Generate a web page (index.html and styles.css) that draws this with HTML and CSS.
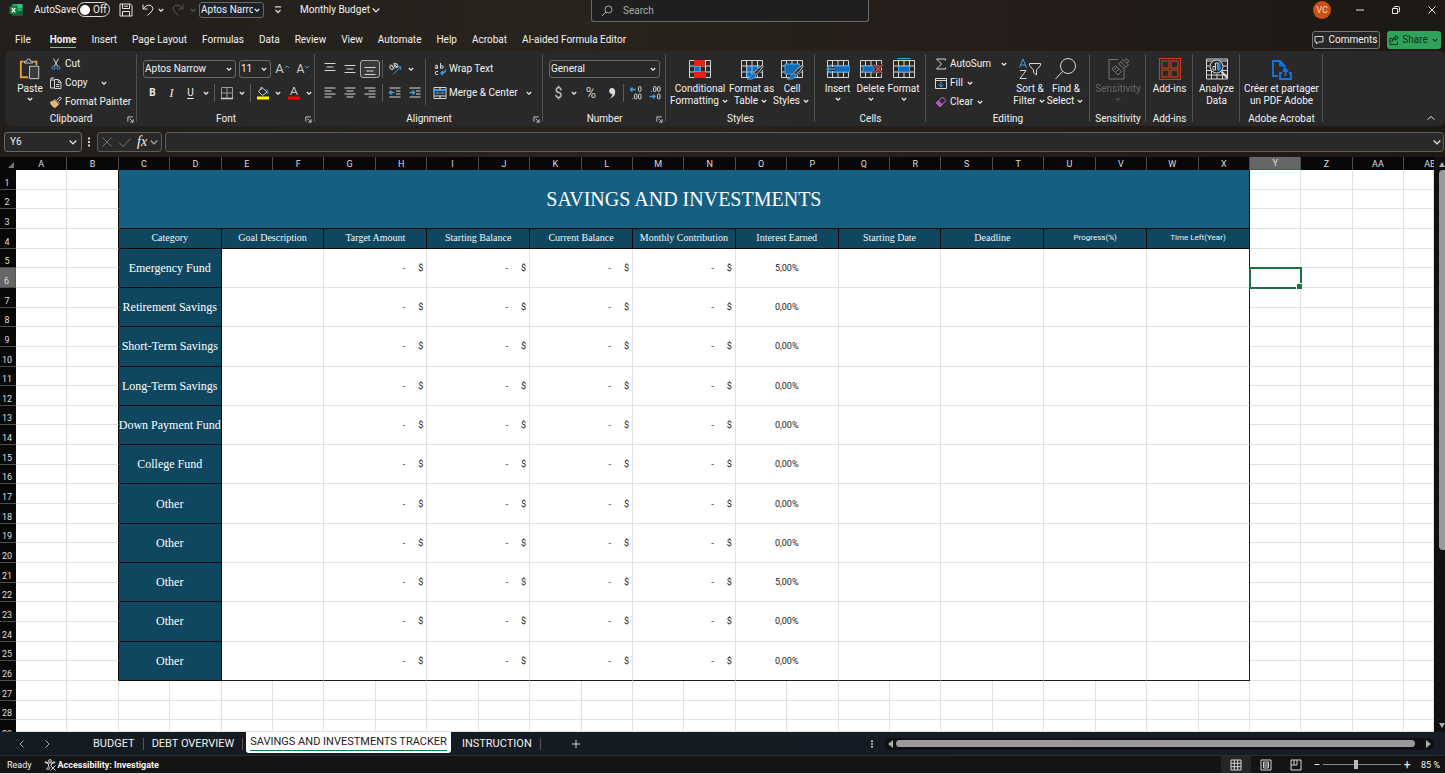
FILE: index.html
```html
<!DOCTYPE html>
<html lang="en">
<head>
<meta charset="utf-8">
<title>Monthly Budget</title>
<link rel="stylesheet" href="styles.css">
</head>
<body>
<svg class="sprite" aria-hidden="true">
  <symbol id="chev" viewBox="0 0 8 8"><path d="M1.8 3 L4 5.2 L6.2 3"/></symbol>
  <symbol id="launch" viewBox="0 0 8 8"><path d="M1 6.5V1H6.5M3 3L7 7M7 3.8V7H3.8"/></symbol>
  <symbol id="grid" viewBox="0 0 24 22"><path d="M1.5 2.5H22.5V19.5H1.5ZM1.5 8H22.5M1.5 14H22.5M6.5 2.5V19.5M12 2.5V19.5M17.5 2.5V19.5"/></symbol>
  <symbol id="brush" viewBox="0 0 24 22"><path class="halo" d="M23 8L14 17"/><path d="M22.5 7.2Q18 9.500 13.500 15L15.500 17Q20.500 12.500 23 8.500Z" fill="#292929"/><path class="bluefill" d="M14 15.500Q17 17 15 19.500Q12 22 7 21Q10.500 19.500 11 17.500Q12 15.500 14 15.500Z"/></symbol>
</svg>

<header class="titlebar">
  <div class="quick">
    <svg class="logo" viewBox="0 0 14 14"><rect x="3" y="1" width="10.500" height="12" rx="1" fill="#21a366"/><path d="M8 1H12.500a1 1 0 0 1 1 1V5H8Z" fill="#33c481"/><path d="M3 8H13.500V12a1 1 0 0 1-1 1H4a1 1 0 0 1-1-1Z" fill="#185c37"/><rect x="0.500" y="3" width="8" height="8" rx="0.800" fill="#107c41"/><path d="M2.700 4.800L6.300 9.300M6.300 4.800L2.700 9.300" stroke="#fff" stroke-width="1.200"/></svg>
    <label class="autosave" for="autosave">AutoSave</label>
    <button class="toggle" id="autosave"><i></i>Off</button>
    <button class="ico save" aria-label="Save"><svg viewBox="0 0 14 14"><path d="M1 1H11.500L13 2.500V13H1ZM3.500 1V5.500H10.500V1M3.500 13V8.500H10.500V13M5 3.200H9"/></svg></button>
    <button class="ico undo" aria-label="Undo"><svg viewBox="0 0 14 14"><path d="M2 1.500V6H6.500M2.200 5.800Q6 1 10 2.500Q13.500 5 11 8L6.500 12.500"/></svg></button>
    <svg class="chev"><use href="#chev"/></svg>
    <button class="ico redo dim" aria-label="Redo"><svg viewBox="0 0 14 14"><path d="M12 1.500V6H7.500M11.800 5.800Q8 1 4 2.500Q0.500 5 3 8L7.500 12.500"/></svg></button>
    <svg class="chev faint"><use href="#chev"/></svg>
    <span class="combo quickfont"><select aria-label="Quick font"><option>Aptos Narrow</option></select><svg class="chev"><use href="#chev"/></svg></span>
    <svg class="more" viewBox="0 0 8 8"><path d="M1.500 1.500H6.500M2 4L4 6L6 4"/></svg>
    <button class="doc">Monthly Budget<svg class="chev wide"><use href="#chev"/></svg></button>
  </div>
  <label class="search"><svg viewBox="0 0 12 12"><circle cx="7.500" cy="4.500" r="3.500"/><path d="M5 7L1 11"/></svg><input type="text" placeholder="Search" aria-label="Search"></label>
  <div class="window">
    <span class="avatar">VC</span>
    <button class="ico" aria-label="Minimize"><svg viewBox="0 0 10 10"><path d="M1 5H9"/></svg></button>
    <button class="ico" aria-label="Restore"><svg viewBox="0 0 10 10"><path d="M1.500 3.500H6.500V8.500H1.500ZM3 3.500V2.500Q3 1.500 4 1.500H7.500Q8.500 1.500 8.500 2.500V6Q8.500 7 7.500 7H6.500"/></svg></button>
    <button class="ico" aria-label="Close"><svg viewBox="0 0 10 10"><path d="M1.500 1.500L8.500 8.500M8.500 1.500L1.500 8.500"/></svg></button>
  </div>
</header>

<nav class="tabs">
  <a class="file" href="#">File</a><a class="current" href="#">Home</a><a href="#">Insert</a><a href="#">Page Layout</a><a href="#">Formulas</a><a href="#">Data</a><a href="#">Review</a><a href="#">View</a><a href="#">Automate</a><a href="#">Help</a><a href="#">Acrobat</a><a href="#">AI-aided Formula Editor</a>
  <span class="grow"></span>
  <button class="comments"><svg viewBox="0 0 10 10"><path d="M1 1.500H9V7H4.500L2.500 9V7H1Z"/></svg>Comments</button>
  <button class="share"><svg viewBox="0 0 10 10"><path d="M3 3.500H1V9.500H8.500V6.500M3 6.500Q3.500 3.500 6.500 3.500V5.200L9.300 2.800L6.500 0.600V2.200Q3 2.500 3 6.500"/></svg>Share<svg class="chev"><use href="#chev"/></svg></button>
</nav>

<section class="ribbon">
  <div class="group clipboard">
    <div class="content">
      <button class="big paste"><svg viewBox="0 0 24 24"><path d="M5 4H2V21H10M16 4H19V8" stroke="#e8a33d" stroke-width="2"/><path d="M6 5.500V3.500H8.500Q8.500 1 10.500 1T12.500 3.500H15V5.500Z"/><path d="M11.500 9H21.500V22.500H11.500Z" fill="#3a3a3a"/></svg><span>Paste</span><svg class="chev"><use href="#chev"/></svg></button>
      <div class="stack">
        <button><svg viewBox="0 0 12 12"><path d="M3.500 0.500L7.800 8.500M8.500 0.500L4.200 8.500"/><g class="blue"><circle cx="3.500" cy="9.800" r="1.600"/><circle cx="8.500" cy="9.800" r="1.600"/></g></svg>Cut</button>
        <button><svg viewBox="0 0 12 12"><path d="M4 3H0.500V11H4M4 1H1V3M4.500 2.500H8.500L11 5V11.500H4.500ZM8.200 2.500V5.300H11M6 7.500H9.500M6 9.500H9.500"/></svg>Copy<svg class="chev far"><use href="#chev"/></svg></button>
        <button><svg viewBox="0 0 12 12"><path d="M7 4L10 1L11.500 2.500L8.500 5.500M5 3.500L9 7.500L8 8.500L4 4.500Z"/><path d="M4 4.500Q2.500 6 0.500 6Q1 9.500 4.500 11.500Q7 10.500 8 8.500Z" fill="#e8b45c" stroke="#f3d08c"/></svg>Format Painter</button>
      </div>
    </div>
    <footer>Clipboard<svg class="launch"><use href="#launch"/></svg></footer>
  </div>

  <div class="group font">
    <div class="content rows">
      <div class="row">
        <span class="combo name"><select aria-label="Font"><option>Aptos Narrow</option></select><svg class="chev"><use href="#chev"/></svg></span>
        <span class="combo size"><select aria-label="Font size"><option>11</option></select><svg class="chev"><use href="#chev"/></svg></span>
        <button class="tool glyph" aria-label="Grow font">A<svg viewBox="0 0 6 10"><path class="blue" d="M1 4L3 2L5 4"/></svg></button>
        <button class="tool glyph small" aria-label="Shrink font">A<svg viewBox="0 0 6 10"><path class="blue" d="M1 2L3 4L5 2"/></svg></button>
      </div>
      <div class="row styling">
        <button class="tool b">B</button><button class="tool i">I</button><button class="tool u">U</button><svg class="chev"><use href="#chev"/></svg><hr>
        <button class="tool" aria-label="Borders"><svg viewBox="0 0 14 14"><path class="grey" d="M1.500 1.500H12.500V12.500H1.500ZM7 1.500V12.500M1.500 7H12.500"/><path d="M1 12.500H13" stroke-width="1.500"/></svg></button><svg class="chev"><use href="#chev"/></svg><hr>
        <button class="tool" aria-label="Fill colour"><svg viewBox="0 0 14 14"><path d="M6 1.500L11 6L6.500 9.500L2.500 5.500ZM5 4V1"/><path class="blue" d="M10.500 3Q12.500 4 12 8"/><path d="M1 12H13" stroke="#ffff00" stroke-width="3"/></svg></button><svg class="chev"><use href="#chev"/></svg>
        <button class="tool" aria-label="Font colour"><svg viewBox="0 0 14 14"><path d="M3.500 9L7 1L10.500 9M4.700 6.300H9.300"/><path d="M1 12H13" stroke="#ff0000" stroke-width="3"/></svg></button><svg class="chev"><use href="#chev"/></svg>
      </div>
    </div>
    <footer>Font<svg class="launch"><use href="#launch"/></svg></footer>
  </div>

  <div class="group alignment">
    <div class="content">
      <div class="rows aligns">
        <div class="row">
          <button class="tool" aria-label="Top align"><svg viewBox="0 0 14 14"><path d="M1.500 1.500H12.500M3.500 5H10.500M1.500 8.500H12.500"/></svg></button><button class="tool" aria-label="Middle align"><svg viewBox="0 0 14 14"><path d="M1.500 3.500H12.500M3.500 7H10.500M1.500 10.500H12.500"/></svg></button><button class="tool on" aria-label="Bottom align"><svg viewBox="0 0 14 14"><path d="M1.500 5.500H12.500M3.500 9H10.500M1.500 12.500H12.500"/></svg></button><hr>
          <button class="tool" aria-label="Orientation"><svg viewBox="0 0 14 14"><ellipse cx="3.500" cy="5.500" rx="1.600" ry="2" transform="rotate(-40 3.500 5.500)"/><path d="M3.200 2.700L6.500 6.500M5.500 0.800L9 5.500"/><ellipse cx="8" cy="3.500" rx="1.600" ry="2" transform="rotate(-40 8 3.500)"/><path class="blue" d="M5 12.500L12.500 5M9.500 4.800H12.700V8"/></svg></button><svg class="chev"><use href="#chev"/></svg>
        </div>
        <div class="row">
          <button class="tool" aria-label="Align left"><svg viewBox="0 0 14 14"><path d="M1.500 2H12.500M1.500 5H8.500M1.500 8H12.500M1.500 11H8.500"/></svg></button><button class="tool" aria-label="Centre"><svg viewBox="0 0 14 14"><path d="M1.500 2H12.500M3.500 5H10.500M1.500 8H12.500M3.500 11H10.500"/></svg></button><button class="tool" aria-label="Align right"><svg viewBox="0 0 14 14"><path d="M1.500 2H12.500M5.500 5H12.500M1.500 8H12.500M5.500 11H12.500"/></svg></button><hr>
          <button class="tool" aria-label="Decrease indent"><svg viewBox="0 0 14 14"><path d="M1.500 2H12.500M8 5H12.500M8 8H12.500M1.500 11H12.500"/><path class="blue strong" d="M6.500 6.500H1.500M3.500 4.500L1.500 6.500L3.500 8.500"/></svg></button><button class="tool" aria-label="Increase indent"><svg viewBox="0 0 14 14"><path d="M1.500 2H12.500M8 5H12.500M8 8H12.500M1.500 11H12.500"/><path class="blue strong" d="M1.500 6.500H6.500M4.500 4.500L6.500 6.500L4.500 8.500"/></svg></button>
        </div>
      </div>
      <div class="rows wraps">
        <button class="row"><svg viewBox="0 0 14 14"><path d="M2 3.500Q4.500 2.500 4.500 4V6.500M4.500 5Q2 4.500 2 6Q3 7 4.500 6M7.500 1V6.500M7.500 4Q10.500 3 10.500 5T7.500 6M5 9.500Q2.200 8.700 2.200 11T5 12.500"/><path class="blue strong" d="M12.500 7.500Q13 11 8 11M10 9L8 11L10 13"/></svg>Wrap Text</button>
        <button class="row"><svg viewBox="0 0 14 14"><path d="M1 1.500H13V12.500H1ZM1 4H13M1 10H13M7 1.500V4M7 10V12.500"/><path class="blue" d="M1.500 4.500H12.500V9.500H1.500ZM3.500 7H10.500M5 5.500L3.500 7L5 8.500M9 5.500L10.500 7L9 8.500"/></svg>Merge &amp; Center<svg class="chev last"><use href="#chev"/></svg></button>
      </div>
    </div>
    <footer>Alignment<svg class="launch"><use href="#launch"/></svg></footer>
  </div>

  <div class="group number">
    <div class="content rows">
      <div class="row"><span class="combo format"><select aria-label="Number format"><option>General</option></select><svg class="chev"><use href="#chev"/></svg></span></div>
      <div class="row">
        <button class="tool sym">$</button><svg class="chev"><use href="#chev"/></svg><button class="tool sym pct">%</button><button class="tool sym comma" aria-label="Comma style"><svg viewBox="0 0 14 14"><path d="M7 2a3 3 0 1 0 .5 6Q7.500 10 5 12.500Q10.500 10.500 10.200 5.500Q9.800 2 7 2Z" fill="#ddd" stroke="none"/></svg></button><hr>
        <button class="tool" aria-label="Increase decimal"><svg viewBox="0 0 14 14"><path class="blue strong" d="M7 3.500H1.500M3.500 1.500L1.500 3.500L3.500 5.500"/><rect x="9.500" y=".5" width="2.500" height="5" rx="1.200"/><rect x="5.500" y="8" width="2.500" height="5" rx="1.200"/><rect x="9.500" y="8" width="2.500" height="5" rx="1.200"/><path d="M3.500 12.500h.8"/></svg></button>
        <button class="tool" aria-label="Decrease decimal"><svg viewBox="0 0 14 14"><path class="blue strong" d="M1.500 10.500H7M5 8.500L7 10.500L5 12.500"/><rect x="5.500" y=".5" width="2.500" height="5" rx="1.200"/><rect x="9.500" y=".5" width="2.500" height="5" rx="1.200"/><rect x="9.500" y="8" width="2.500" height="5" rx="1.200"/><path d="M3 5.500h.8"/></svg></button>
      </div>
    </div>
    <footer>Number<svg class="launch"><use href="#launch"/></svg></footer>
  </div>

  <div class="group styles">
    <div class="content bigs">
      <button class="big"><svg viewBox="0 0 24 22"><use href="#grid"/><path d="M6.500 2.500H16.500V8H6.500ZM6.500 14H17.500V19.500H6.500Z" fill="#e3231a" stroke="#e3231a"/><path class="bluefill" d="M6.500 8.500H12V13.500H6.500Z"/></svg><span>Conditional<br>Formatting<svg class="chev"><use href="#chev"/></svg></span></button>
      <button class="big"><svg viewBox="0 0 24 22"><use href="#grid"/><path class="bluefill" d="M7 8.500H22V14H17L12 19H7Z"/><path d="M12 8V19M17.500 8V14M7 14H20" stroke="#7fb9e8"/><use href="#brush"/></svg><span>Format as<br>Table<svg class="chev"><use href="#chev"/></svg></span></button>
      <button class="big"><svg viewBox="0 0 24 22"><use href="#grid"/><path class="bluefill" d="M5 6H19.500V16H5Z"/><use href="#brush"/></svg><span>Cell<br>Styles<svg class="chev"><use href="#chev"/></svg></span></button>
    </div>
    <footer>Styles</footer>
  </div>

  <div class="group cells">
    <div class="content bigs">
      <button class="big"><svg viewBox="0 0 24 22"><use href="#grid"/><path class="bluefill" d="M8 8H24V14H8Z"/><path d="M0 11H9" stroke="#292929" stroke-width="4"/><path class="blue strong" d="M9 11H.8M5.500 6.500L1 11L5.500 15.500"/></svg><span>Insert</span><svg class="chev"><use href="#chev"/></svg></button>
      <button class="big"><svg viewBox="0 0 24 22"><use href="#grid"/><path class="bluefill" d="M4 8H15V14H4Z"/><path d="M14.500 6.500L23.500 15.500M23.500 6.500L14.500 15.500" stroke="#292929" stroke-width="3"/><path d="M14.500 6.500L23.500 15.500M23.500 6.500L14.500 15.500" stroke="#e84a3d" stroke-width="1.300"/></svg><span>Delete</span><svg class="chev"><use href="#chev"/></svg></button>
      <button class="big"><svg viewBox="0 0 24 22"><use href="#grid"/><path class="bluefill" d="M6.500 8.500H17.500V14H6.500Z"/><path class="blue" d="M5.500.5H18.500"/></svg><span>Format</span><svg class="chev"><use href="#chev"/></svg></button>
    </div>
    <footer>Cells</footer>
  </div>

  <div class="group editing">
    <div class="content">
      <div class="stack">
        <button><svg viewBox="0 0 12 12"><path d="M10.500 2.500V1H1.500L6.500 6L1.500 11H10.500V9.500"/></svg>AutoSum<svg class="chev mid"><use href="#chev"/></svg></button>
        <button><svg viewBox="0 0 12 12"><path d="M.5 1.500H11.500V11.500H.5ZM.5 3.500H11.500"/><path class="blue" d="M6 4.500V10M3.500 7.500L6 10L8.500 7.500"/></svg>Fill<svg class="chev near"><use href="#chev"/></svg></button>
        <button><svg viewBox="0 0 12 12"><path d="M7.500 1L11 4.500L5 10.500L1.500 7Z" stroke="#c77dd4"/><path d="M3.500 5L7 8.500L5 10.500L1.500 7Z" fill="#b146c2" stroke="#c77dd4"/></svg>Clear<svg class="chev near"><use href="#chev"/></svg></button>
      </div>
      <button class="big"><svg viewBox="0 0 24 22"><path class="blue" d="M1.500 9.500L5 1L8.500 9.500M2.700 7H7.300"/><path d="M2 12.500H8L2 20.500H8.500M11.500 5.500H22.500V7.500L18.500 12V17L15.500 14.500V12L11.500 7.500Z"/></svg><span>Sort &amp;<br>Filter<svg class="chev"><use href="#chev"/></svg></span></button>
      <button class="big"><svg viewBox="0 0 24 22"><circle cx="14" cy="8" r="7.500"/><path d="M8.500 13.500L1.500 21"/></svg><span>Find &amp;<br>Select<svg class="chev"><use href="#chev"/></svg></span></button>
    </div>
    <footer>Editing</footer>
  </div>

  <div class="group sensitivity">
    <div class="content bigs"><button class="big faint"><svg viewBox="0 0 24 22"><path d="M12 1.500H3V21H18V11"/><path d="M6 11L9.500 7.500L15.500 13.500L12 17ZM7.500 12.500L11 9M9.500 14.500L13 11M12.500 6L17 1.500L22.500 7L18 10.500ZM15 4L19.500 8.500M19 .5L23 3L21 5"/></svg><span>Sensitivity</span><svg class="chev faint"><use href="#chev"/></svg></button></div>
    <footer>Sensitivity</footer>
  </div>
  <div class="group addins">
    <div class="content bigs"><button class="big"><svg viewBox="0 0 24 22"><g stroke="#c43e1c" stroke-width="1.200"><rect x="1.500" y=".5" width="21" height="21"/><rect x="4" y="3" width="7" height="7"/><rect x="13" y="3" width="7" height="7"/><rect x="4" y="12" width="7" height="7"/><rect x="13" y="12" width="7" height="7"/></g></svg><span>Add-ins</span></button></div>
    <footer>Add-ins</footer>
  </div>
  <div class="group analyze">
    <div class="content bigs"><button class="big"><svg viewBox="0 0 24 22"><path d="M1.500 1H22.500V21H1.500ZM1.500 3H22.500M1.500 8H22.500M1.500 12.500H22.500M1.500 17H22.500M6.500 12V21M12 16V21M17.500 14V21"/><circle cx="11.500" cy="8.500" r="6.500" fill="#292929"/><path d="M16.500 13.500L22.500 20" stroke-width="2"/><path d="M8 12V8.500H10.500V12ZM10.500 12V5H13V12"/><path class="bluefill" d="M13 5H15V12H13Z"/></svg><span>Analyze<br>Data</span></button></div>
  </div>
  <div class="group acrobat">
    <div class="content bigs"><button class="big"><svg viewBox="0 0 24 22"><path d="M9 18H4V3H11L15.500 7.500V11M11 3V7.500H15.500M13 15H11V21H22V15H20M16.500 18V11M13.800 13.500L16.500 11L19.200 13.500" stroke="#1473e6" stroke-width="1.800"/></svg><span>Créer et partager<br>un PDF Adobe</span></button></div>
    <footer>Adobe Acrobat</footer>
  </div>
  <button class="collapse" aria-label="Collapse ribbon"><svg viewBox="0 0 10 10"><path d="M1.500 6.500L5 3.500L8.500 6.500"/></svg></button>
</section>

<section class="formula">
  <span class="combo namebox"><select aria-label="Name box"><option>Y6</option></select><svg class="chev wide"><use href="#chev"/></svg></span>
  <svg class="dots" viewBox="0 0 4 12"><path d="M2 1.500v2M2 5v2M2 8.500v2" stroke-width="2"/></svg>
  <div class="fx">
    <svg class="dim" viewBox="0 0 12 12"><path d="M1.500 1.500L10.500 10.500M10.500 1.500L1.500 10.500"/></svg>
    <svg class="dim" viewBox="0 0 12 12"><path d="M.5 7L4 10.500L11.500 2.500"/></svg>
    <button>fx</button><svg class="chev wide soft"><use href="#chev"/></svg>
  </div>
  <label class="entry"><input type="text" aria-label="Formula"><svg class="chev wide"><use href="#chev"/></svg></label>
</section>

<main class="workspace">
  <table class="sheet" id="sheet"></table>
  <div class="vscroll"><i class="up"></i><b></b><i class="down"></i></div>
</main>

<nav class="sheets">
  <svg class="nav" viewBox="0 0 10 10"><path d="M6.500 1.500L3 5L6.500 8.500"/></svg>
  <svg class="nav" viewBox="0 0 10 10"><path d="M3.500 1.500L7 5L3.500 8.500"/></svg>
  <a class="first" href="#">BUDGET</a><a href="#">DEBT OVERVIEW</a><a class="active" href="#"><span>SAVINGS AND INVESTMENTS TRACKER</span></a><a href="#">INSTRUCTION</a>
  <button class="add" aria-label="New sheet"><svg viewBox="0 0 10 10"><path d="M5 1V9M1 5H9"/></svg></button>
  <span class="grow"></span>
  <svg class="dots" viewBox="0 0 4 12"><path d="M2 1.500v2M2 5v2M2 8.500v2" stroke-width="2"/></svg>
  <div class="hscroll"><i class="left"></i><b></b><i class="right"></i></div>
</nav>

<footer class="status">
  <span>Ready</span>
  <button class="access"><svg viewBox="0 0 12 12"><circle cx="6" cy="2" r="1.400"/><path d="M1 3.500L4.500 5V7.500L2.500 11M11 3.500L7.500 5L7.500 6.500M1 3.500Q1 2.500 2 2.700L4.500 4H7.500L10 2.700Q11 2.500 11 3.500M4.500 11L6 8M6.500 6.500L11.500 11.500M11.500 6.500L6.500 11.500"/></svg>Accessibility: Investigate</button>
  <span class="grow"></span>
  <button class="view on" aria-label="Normal"><svg viewBox="0 0 12 12"><path d="M1 1H11V11H1ZM4.300 1V11M7.700 1V11M1 4.300H11M1 7.700H11"/></svg></button>
  <button class="view" aria-label="Page layout"><svg viewBox="0 0 12 12"><path d="M1 1H11V11H1ZM3.500 3H8.500V9H3.500ZM4 5H8M4 7H8"/></svg></button>
  <button class="view" aria-label="Page break preview"><svg viewBox="0 0 12 12"><path d="M1 1H11V11H1ZM1 6H7V1M4 1V6"/></svg></button>
  <button class="step">−</button><input class="zoom" type="range" min="10" max="190" value="86" aria-label="Zoom"><button class="step">+</button>
  <span class="percent">85 %</span>
</footer>
<script src="sheet.js"></script>
</body>
</html>
```
FILE: styles.css
```css
* { box-sizing: border-box; }
body {
  margin: 0; min-height: 100vh; height: 100vh; overflow: hidden;
  display: flex; flex-direction: column;
  background: linear-gradient(90deg, #211e1b, #28231d 40%, #241d1a 70%, #1c1813);
  border-bottom: 1px solid #d8d8d8;
  color: #f2f2f2; font: 10px/12px Roboto, "Noto Sans", sans-serif;
}
svg { fill: none; stroke: #d6d6d6; stroke-width: 1; flex: none; }
.sprite { display: none; }
button, select, input { font: inherit; color: inherit; background: none; border: 0; padding: 0; margin: 0; }
button { display: flex; align-items: center; justify-content: center; white-space: nowrap; }
a { color: inherit; text-decoration: none; white-space: nowrap; }
hr { width: 1px; height: 18px; border: 0; background: #5c5c5c; margin: 0 2px; flex: none; }
.grow { flex: 1; }
.chev { width: 12px; height: 8px; stroke: #eee; stroke-width: 1.2; }
.chev.wide { width: 12px; height: 12px; stroke-width: 0.8; }
.blue { stroke: #3f9fe0; }
.strong { stroke-width: 1.4; }
.grey { stroke: #9a9a9a; }
.bluefill { fill: #0f6cbd; stroke: #4aa3e6; }
.halo { stroke: #292929; stroke-width: 5; }
.dim, .dim svg { stroke: #777; }
.faint, .faint svg { stroke: #777; color: #666; }
.chev.faint { stroke: #555; }
.soft { stroke: #aaa; }
.combo { position: relative; display: flex; align-items: center; height: 18px; border: 1px solid #686868; border-radius: 3px; }
.combo select { appearance: none; width: 100%; height: 100%; padding: 0 10px 0 1px; outline: none; }
.combo .chev { position: absolute; right: 0; }

.titlebar { display: grid; grid-template-columns: minmax(0, 591fr) 278px minmax(0, 576fr); height: 28px; flex: none; }
.quick, .window { display: flex; align-items: center; height: 19px; }
.logo { width: 14px; height: 14px; margin: 0 11px 0 9px; stroke: none; }
.autosave { width: 43px; }
.toggle { width: 33px; height: 15px; border: 1px solid #ddd; border-radius: 8px; justify-content: flex-start; gap: 3px; padding-left: 2px; }
.toggle i { width: 10px; height: 10px; border-radius: 50%; background: #fff; }
.ico svg { width: 14px; height: 14px; stroke: #e6e6e6; }
.ico.dim svg { stroke: #5a5550; }
.save { margin-left: 9px; }
.undo { margin-left: 8px; }
.redo { margin: 0 2px 0 4px; }
.quickfont { width: 65px; height: 16px; background: #1f2329; }
.more { width: 10px; height: 10px; margin: 0 17px 0 9px; }
.search { display: flex; align-items: center; height: 22px; border: 1px solid #6b6b6b; border-top: 0; border-radius: 0 0 3px 3px; background: #1f1f1f; padding: 0 9px; gap: 10px; }
.search svg { width: 12px; height: 12px; stroke: #aaa; }
.search input { flex: 1; min-width: 0; height: 16px; outline: none; }
.search input::placeholder { color: #a8a8a8; opacity: 1; }
.window { justify-content: flex-end; gap: 22px; padding-right: 6px; }
.avatar { width: 18px; height: 18px; border-radius: 50%; background: #ca5010; text-align: center; line-height: 18px; font-size: 9px; color: #f5d9c9; }
.window .ico svg { width: 10px; height: 10px; margin: 0 2px; }

.tabs { display: flex; align-items: center; height: 23px; flex: none; gap: 15px; padding: 0 4px 0 15px; }
.tabs a { height: 16px; line-height: 15px; }
.tabs .file { margin-right: 4px; }
.tabs .current { font-weight: 700; border-bottom: 1px solid #6ccb8f; }
.comments, .share { height: 18px; border-radius: 3px; gap: 4px; }
.comments { width: 68px; border: 1px solid #777; background: #262626; margin-right: -8px; }
.share { width: 54px; background: #2fa35c; color: #10301d; gap: 3px; }
.comments svg, .share svg { width: 10px; height: 10px; }
.share .chev { width: 8px; }
.share svg { stroke: #10301d; }

.ribbon { display: flex; height: 75px; flex: none; margin: 0 0 0 5px; padding: 2px 0 0; background: #292929; border-radius: 6px; }
.group { display: flex; flex-direction: column; position: relative; flex: none; height: 73px; }
.group::after { content: ""; position: absolute; right: 0; top: 1px; width: 1px; height: 68px; background: #505050; }
.content { display: flex; height: 59px; }
.group footer { text-align: center; height: 14px; line-height: 14px; }
.launch { position: absolute; right: 3px; bottom: 3px; width: 7px; height: 7px; }
.rows { display: flex; flex-direction: column; gap: 6px; padding-top: 7px; }
.row { display: flex; align-items: center; height: 18px; }
.tool { width: 19px; height: 18px; }
.tool svg { width: 14px; height: 14px; }
.tool.on { border: 1px solid #aaa; border-radius: 3px; background: #3a3a3a; }
.big { flex-direction: column; justify-content: flex-start; padding-top: 5px; text-align: center; }
.big > svg:first-child { width: 24px; height: 22px; margin-bottom: 3px; }
.big > span { display: block; }
.big span .chev { width: 10px; margin-left: 1px; vertical-align: -1px; }
.bigs { justify-content: center; }
.stack { display: grid; grid-template-rows: repeat(3, 1fr); padding-top: 1px; }
.stack button { justify-content: flex-start; gap: 3px; }
.stack button > svg:first-child { width: 12px; height: 12px; }

.clipboard { width: 132px; }
.paste { width: 36px; margin: 0 2px 0 7px; }
.far { margin-left: 7px; }
.font { width: 178px; }
.font .content, .number .content { padding-left: 6px; }
.styling .tool { width: 19px; }
.name { width: 93px; margin-right: 3px; }
.size { width: 32px; margin-right: 2px; }
.glyph { font-size: 13px; color: #ccc; align-items: center; }
.glyph.small { font-size: 12px; margin-left: 2px; }
.glyph svg { width: 6px; height: 12px; }
.b { font-weight: 700; }
.i { font-family: "Liberation Serif", serif; font-style: italic; font-size: 12px; }
.u { text-decoration: underline; text-underline-offset: 2px; }
.alignment { width: 228px; }
.aligns { width: 110px; padding-left: 5px; }
.aligns .tool { width: 20px; }
.wraps { position: relative; padding-left: 8px; }
.wraps::before { content: ""; position: absolute; left: 0; top: 6px; height: 46px; width: 1px; background: #505050; }
.wraps .row { gap: 2px; justify-content: flex-start; }
.wraps .row > svg:first-child { width: 14px; height: 14px; }
.last { margin-left: 3px; }
.number { width: 123px; }
.format { width: 111px; }
.sym { font-size: 14px; color: #ccc; }
.pct { width: 22px; }
.styles { width: 149px; }
.styles .bigs { justify-content: flex-start; padding-left: 5px; }
.styles .big { width: 45px; }
.styles .big:first-child { width: 58px; }
.styles .big:last-child { width: 36px; }
.cells { width: 111px; }
.cells .big { width: 33px; }
.editing { width: 164px; }
.editing .stack { width: 86px; padding-left: 9px; }
.editing .big { width: 36px; }
.mid { margin-left: 4px; }
.near { margin-left: -2px; }
.sensitivity { width: 56px; }
.addins, .analyze { width: 47px; }
.acrobat { width: 83px; }
.collapse { margin: auto 9px 3px auto; }
.collapse svg { width: 10px; height: 10px; }

.formula { display: flex; align-items: center; height: 31px; flex: none; padding: 0 1px 0 4px; }
.formula > * { height: 20px; }
.namebox { width: 78px; padding-left: 4px; background: #292929; }
.namebox .chev { right: 2px; }
.formula .dots { width: 4px; height: 12px; margin: 0 6px 0 5px; }
.fx { display: flex; align-items: center; gap: 6px; width: 65px; border: 1px solid #5c5c5c; border-radius: 3px; background: #292929; padding-left: 3px; }
.fx svg:not(.chev) { width: 12px; height: 12px; }
.fx button { font: italic 14px/16px "Liberation Serif", serif; }
.fx .chev { margin-left: -5px; }
.entry { flex: 1; display: flex; align-items: center; border: 1px solid #5c5c5c; border-radius: 3px; background: #292929; margin-left: 3px; }
.entry input { flex: 1; outline: none; }

.workspace { flex: 1; min-height: 0; display: flex; }
.sheet {
  flex: 1; min-width: 0; overflow: hidden; display: grid; background: #fff;
  grid-template-columns: 16px repeat(27, minmax(0, 50fr)) minmax(0, 29fr);
  grid-template-rows: 13px repeat(28, minmax(0, 50fr)) minmax(0, 30fr);
}
.sheet tbody, .sheet tr { display: contents; }
.sheet th, .sheet td { padding: 0; font-weight: 400; min-width: 0; white-space: nowrap; display: flex; align-items: center; justify-content: center; border: 0 solid #e1e1e1; }
.sheet td { border-width: 0 1px 1px 0; color: #222; font-size: 9px; }
.sheet .head { background: #080808; border-right: 1px solid #4c4c4c; font-size: 9px; color: #ddd; }
.sheet .head.picked { background: #666; border-bottom: 1px solid #107c41; }
.sheet .side { background: #080808; border-bottom: 1px solid #4c4c4c; font-size: 9px; color: #ddd; align-items: flex-end; padding-right: 2px; overflow: hidden; }
.sheet .side.picked { background: #666; border-right: 1px solid #107c41; }
.sheet .side.cut { align-items: flex-start; padding-top: 8px; border: 0; }
.sheet .head.cut { justify-content: flex-start; padding-left: 20px; overflow: hidden; border: 0; }
.sheet .corner { background: #080808; justify-content: flex-end; align-items: flex-end; padding: 2px; }
.corner::after { content: ""; border: 3px solid #777; border-top-color: transparent; border-left-color: transparent; }
.sheet .edge { border-right-color: #1c1c1c; }
.sheet .floor { border-bottom-color: #1c1c1c; }
.sheet .banner, .sheet .field, .sheet .category { border-width: 0 1px 1px 0; border-color: #0a0a0a; color: #fff; }
.sheet .banner { background: #156082; font: 20px/24px "Liberation Serif", serif; }
.sheet .field { background: #0f4761; color: #f4f4f4; font: 10px/12px "Liberation Serif", serif; }
.sheet .field.plain { font: 8px/12px Roboto, sans-serif; }
.sheet .category { background: #0f4761; font: 12px/14px "Liberation Serif", serif; }
.sheet .money { justify-content: flex-end; gap: 13px; padding-right: 3px; }
.sheet .before { border-right-color: #0a0a0a; }
.sheet .selected { position: relative; outline: 2px solid #197244; outline-offset: -1px; }
.selected::after { content: ""; position: absolute; right: -2px; bottom: -2px; width: 5px; height: 5px; background: #197244; border: 1px solid #fff; border-width: 1px 0 0 1px; }

.vscroll { width: 11px; background: #101010; display: flex; flex-direction: column; align-items: flex-end; padding: 4px 0 3px; gap: 3px; }
.vscroll b { width: 6px; flex: 0 1 380px; background: #9a9a9a; border-radius: 4px 0 0 4px; }
.up, .down { border: 3px solid transparent; height: 6px; }
.up { border-bottom: 5px solid #aaa; border-top: 0; }
.down { border-top: 5px solid #aaa; border-bottom: 0; margin-top: auto; }

.sheets { display: flex; align-items: center; height: 24px; flex: none; background: linear-gradient(90deg, #141b20, #171c27); font-size: 11px; padding: 0 11px 0 17px; border-bottom: 1px solid #2c2c2c; }
.nav { width: 10px; height: 10px; margin-right: 15px; stroke: #aaa; }
.sheets a { display: flex; align-items: center; height: 12px; padding: 0 8px; border-right: 1px solid #555; }
.sheets .first { margin-left: 18px; }
.sheets .active { align-self: flex-start; height: 21px; background: #fff; color: #222; border: 0; border-radius: 0 0 3px 3px; padding: 0 4px; margin: 0 3px; }
.active span { line-height: 16px; border-bottom: 1px solid #107c41; }
.add { margin-left: 30px; }
.add svg { width: 10px; height: 10px; }
.sheets .dots { width: 4px; height: 10px; margin-right: 10px; }
.hscroll { display: flex; align-items: center; gap: 3px; flex: 0 1 550px; height: 12px; border-radius: 6px; background: #101010; padding: 0 3px 0 4px; }
.hscroll b { height: 7px; flex: 0 1 519px; border-radius: 4px; background: #9a9a9a; }
.left, .right { border: 3px solid transparent; border-width: 4px 5px; }
.left { border-left: 0; border-right-color: #aaa; }
.right { border-right: 0; border-left-color: #aaa; margin-left: auto; }

.status { display: flex; align-items: center; height: 17px; flex: none; background: #141414; padding: 0 5px 0 7px; font-size: 9px; }
.access { margin-left: 12px; gap: 2px; font-weight: 700; }
.access svg { width: 12px; height: 12px; }
.view { width: 30px; height: 17px; }
.view.on { background: #262626; }
.view svg { width: 12px; height: 12px; }
.step { width: 12px; font-size: 12px; }
.zoom { appearance: none; width: 78px; height: 10px; background: linear-gradient(#888, #888) center / 100% 1px no-repeat; }
.zoom::-webkit-slider-thumb { appearance: none; width: 4px; height: 9px; background: #bbb; }
.percent { margin-left: 8px; white-space: nowrap; }
```
FILE: sheet.js
```javascript
const sheet = document.getElementById("sheet");
const letters = [..."ABCDEFGHIJKLMNOPQRSTUVWXYZ", "AA", "AB"];
const fields = ["Category", "Goal Description", "Target Amount", "Starting Balance", "Current Balance",
  "Monthly Contribution", "Interest Earned", "Starting Date", "Deadline", "Progress(%)", "Time Left(Year)"];
const goals = [
  ["Emergency Fund", "5,00%"], ["Retirement Savings", "0,00%"], ["Short-Term Savings", "0,00%"],
  ["Long-Term Savings", "0,00%"], ["Down Payment Fund", "0,00%"], ["College Fund", "0,00%"],
  ["Other", "0,00%"], ["Other", "0,00%"], ["Other", "5,00%"], ["Other", "0,00%"], ["Other", "0,00%"]
];
const body = sheet.createTBody();

function cell(tr, tag, col, row, colSpan, rowSpan, kind, html) {
  const el = document.createElement(tag);
  el.className = kind;
  el.colSpan = colSpan;
  el.rowSpan = rowSpan;
  el.style.gridArea = `${row + 1} / ${col + 1} / span ${rowSpan} / span ${colSpan}`;
  el.innerHTML = html;
  tr.append(el);
}

let tr = body.insertRow();
cell(tr, "th", 0, 0, 1, 1, "corner", "");
letters.forEach((name, i) =>
  cell(tr, "th", i + 1, 0, 1, 1, "head" + (name === "Y" ? " picked" : name === "AB" ? " cut" : ""), name));

for (let row = 1; row <= 29; row++) {
  tr = body.insertRow();
  cell(tr, "th", 0, row, 1, 1, "side" + (row === 6 ? " picked" : row === 29 ? " cut" : ""), row);
  for (let col = 1; col <= 28; col++) {
    if (row <= 26 && col >= 3 && col <= 24) continue;
    const kind = col === 2 && row <= 26 ? "before" : col === 25 && row === 6 ? "selected" : "";
    cell(tr, "td", col, row, 1, 1, kind, "");
  }
  if (row === 1) cell(tr, "th", 3, 1, 22, 3, "banner", "SAVINGS AND INVESTMENTS");
  if (row === 4) fields.forEach((name, i) =>
    cell(tr, "th", 3 + i * 2, 4, 2, 1, "field" + (i > 8 ? " plain" : ""), name));
  if (row >= 5 && row <= 25 && row % 2) {
    const goal = goals[(row - 5) / 2];
    const floor = row === 25 ? " floor" : "";
    fields.forEach((name, i) => {
      const money = i >= 2 && i <= 5;
      const kind = i === 0 ? "category" : (money ? "money" : "") + (i === 10 ? " edge" : "") + floor;
      const html = i === 0 ? goal[0] : money ? "<span>-</span><span>$</span>" : i === 6 ? goal[1] : "";
      cell(tr, i === 0 ? "th" : "td", 3 + i * 2, row, 2, 2, kind, html);
    });
  }
}
```
